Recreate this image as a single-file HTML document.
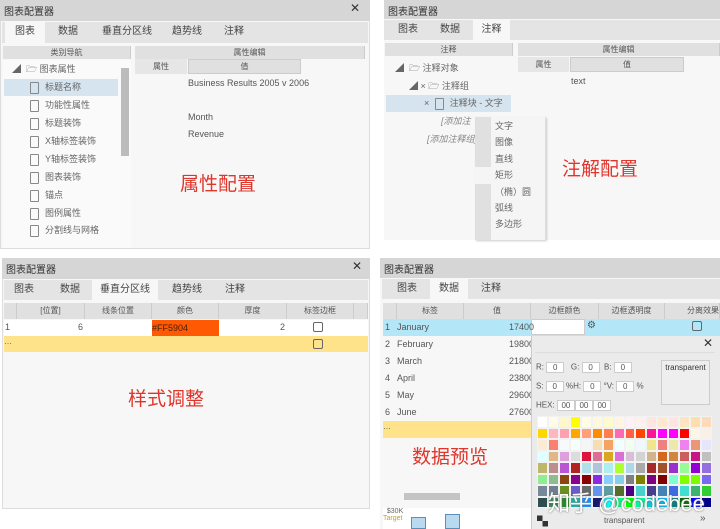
<!DOCTYPE html>
<html><head><meta charset="utf-8"><style>
*{margin:0;padding:0;box-sizing:border-box}
body{width:720px;height:529px;background:#fff;position:relative;overflow:hidden;font-family:"Liberation Sans","Noto Sans CJK SC",sans-serif;font-size:9px;color:#555}
.a{position:absolute}
.title{background:#d6d6d6;font-size:10px;color:#333;padding:3px 4px}
.tabs{background:#e4e4e4;border-bottom:1px solid #f8f8f8}
.tab{position:absolute;top:0;height:100%;font-size:10px;color:#444;text-align:center;line-height:20px}
.tab.on{background:#f7f7f7}
.hd{background:#e0e0e0;color:#555;text-align:center;font-size:8px;line-height:14px;border-right:1px solid #ccc}
.red{color:#e0352b;font-size:19px}
.ti{position:absolute;font-size:9px;color:#666;height:17px;line-height:17px}
.doc{display:inline-block;width:9px;height:12px;border:1px solid #888;border-radius:1px;vertical-align:middle;margin-right:6px}
.c{position:absolute;font-size:9px;line-height:17px;color:#555}
.cb{display:inline-block;width:10px;height:10px;border:1px solid #666;border-radius:2px}
.in{display:inline-block;background:#fff;border:1px solid #ccc;height:11px;line-height:9px;text-align:center;font-size:8px;vertical-align:middle}
#grid{position:absolute;left:537px;top:416px;width:175px;height:92px;display:grid;grid-template-columns:repeat(16,1fr);grid-template-rows:repeat(8,1fr)}
</style></head><body>

<!-- Panel 1 -->
<div class="a" style="left:0;top:0;width:370px;height:249px;background:#f7f7f7;border:1px solid #ddd"></div>
<div class="a title" style="left:0;top:0;width:370px;height:21px">图表配置器<span style="position:absolute;right:10px;top:1px;font-size:12px">✕</span></div>
<div class="a tabs" style="left:2px;top:22px;width:366px;height:22px">
<div class="tab on" style="left:3px;width:40px">图表</div>
<div class="tab" style="left:48px;width:36px">数据</div>
<div class="tab" style="left:96px;width:58px">垂直分区线</div>
<div class="tab" style="left:165px;width:40px">趋势线</div>
<div class="tab" style="left:216px;width:32px">注释</div>
</div>
<div class="a hd" style="left:3px;top:46px;width:128px;height:13px">类别导航</div>
<div class="a hd" style="left:135px;top:46px;width:230px;height:13px">属性编辑</div>
<div class="a" style="left:3px;top:60px;width:128px;height:188px;background:#fafafa"></div>
<div class="a" style="left:121px;top:68px;width:8px;height:88px;background:#bcbcbc"></div>
<div class="a" style="left:135px;top:59px;width:52px;height:15px;background:#e6e6e6;text-align:center;line-height:15px;font-size:8px">属性</div>
<div class="a" style="left:188px;top:59px;width:113px;height:15px;background:#e0e0e0;border:1px solid #ccc;text-align:center;line-height:13px;font-size:8px">值</div>
<div class="ti" style="left:12px;top:61px">◢ &nbsp;🗁 图表属性</div>
<div class="a" style="left:4px;top:79px;width:114px;height:17px;background:#d5e4ee"></div>
<div class="ti" style="left:30px;top:79px"><span class="doc"></span>标题名称</div>
<div class="ti" style="left:30px;top:97px"><span class="doc"></span>功能性属性</div>
<div class="ti" style="left:30px;top:115px"><span class="doc"></span>标题装饰</div>
<div class="ti" style="left:30px;top:133px"><span class="doc"></span>X轴标签装饰</div>
<div class="ti" style="left:30px;top:151px"><span class="doc"></span>Y轴标签装饰</div>
<div class="ti" style="left:30px;top:169px"><span class="doc"></span>图表装饰</div>
<div class="ti" style="left:30px;top:187px"><span class="doc"></span>锚点</div>
<div class="ti" style="left:30px;top:205px"><span class="doc"></span>图例属性</div>
<div class="ti" style="left:30px;top:222px"><span class="doc"></span>分割线与网格</div>
<div class="c" style="left:188px;top:75px">Business Results 2005 v 2006</div>
<div class="c" style="left:188px;top:109px">Month</div>
<div class="c" style="left:188px;top:126px">Revenue</div>
<div class="a red" style="left:180px;top:169px">属性配置</div>

<!-- Panel 2 -->
<div class="a" style="left:384px;top:0;width:336px;height:240px;background:#f7f7f7"></div>
<div class="a title" style="left:384px;top:0;width:336px;height:19px">图表配置器</div>
<div class="a tabs" style="left:384px;top:20px;width:336px;height:21px">
<div class="tab" style="left:6px;width:36px">图表</div>
<div class="tab" style="left:48px;width:36px">数据</div>
<div class="tab on" style="left:89px;width:37px">注释</div>
</div>
<div class="a hd" style="left:385px;top:43px;width:128px;height:13px">注释</div>
<div class="a hd" style="left:518px;top:43px;width:202px;height:13px">属性编辑</div>
<div class="a" style="left:518px;top:57px;width:51px;height:15px;background:#e6e6e6;text-align:center;line-height:15px;font-size:8px">属性</div>
<div class="a" style="left:570px;top:57px;width:114px;height:15px;background:#e0e0e0;border:1px solid #ccc;text-align:center;line-height:13px;font-size:8px">值</div>
<div class="c" style="left:571px;top:73px">text</div>
<div class="ti" style="left:395px;top:60px">◢ &nbsp;🗁 注释对象</div>
<div class="ti" style="left:409px;top:78px">◢ × 🗁 注释组</div>
<div class="a" style="left:386px;top:95px;width:125px;height:17px;background:#d5e4ee"></div>
<div class="ti" style="left:424px;top:95px">× <span class="doc" style="margin-left:3px"></span>注释块 - 文字</div>
<div class="ti" style="left:441px;top:113px;font-style:italic;color:#888">[添加注</div>
<div class="ti" style="left:427px;top:131px;font-style:italic;color:#888">[添加注释组]</div>
<div class="a" style="left:475px;top:117px;width:71px;height:123px;background:#f5f5f5;border-right:1px solid #ddd;box-shadow:1px 1px 2px #ccc"></div>
<div class="a" style="left:475px;top:117px;width:16px;height:50px;background:#e0e0e0"></div>
<div class="a" style="left:475px;top:184px;width:16px;height:56px;background:#e0e0e0"></div>
<div class="ti" style="left:495px;top:118px">文字</div>
<div class="ti" style="left:495px;top:134px">图像</div>
<div class="ti" style="left:495px;top:151px">直线</div>
<div class="ti" style="left:495px;top:167px">矩形</div>
<div class="ti" style="left:495px;top:184px">（椭）圆</div>
<div class="ti" style="left:495px;top:200px">弧线</div>
<div class="ti" style="left:495px;top:216px">多边形</div>
<div class="a red" style="left:562px;top:154px">注解配置</div>

<!-- Panel 3 -->
<div class="a" style="left:2px;top:258px;width:368px;height:251px;background:#f7f7f7;border:1px solid #ddd"></div>
<div class="a title" style="left:2px;top:258px;width:368px;height:21px">图表配置器<span style="position:absolute;right:8px;top:1px;font-size:12px">✕</span></div>
<div class="a tabs" style="left:4px;top:280px;width:364px;height:21px">
<div class="tab" style="left:0;width:40px">图表</div>
<div class="tab" style="left:48px;width:36px">数据</div>
<div class="tab on" style="left:88px;width:66px">垂直分区线</div>
<div class="tab" style="left:162px;width:42px">趋势线</div>
<div class="tab" style="left:214px;width:34px">注释</div>
</div>
<div class="a hd" style="left:4px;top:303px;width:13px;height:16px"></div>
<div class="a hd" style="left:17px;top:303px;width:68px;height:16px;line-height:16px">[位置]</div>
<div class="a hd" style="left:85px;top:303px;width:67px;height:16px;line-height:16px">线条位置</div>
<div class="a hd" style="left:152px;top:303px;width:67px;height:16px;line-height:16px">颜色</div>
<div class="a hd" style="left:219px;top:303px;width:68px;height:16px;line-height:16px">厚度</div>
<div class="a hd" style="left:287px;top:303px;width:67px;height:16px;line-height:16px">标签边框</div>
<div class="a hd" style="left:354px;top:303px;width:14px;height:16px"></div>
<div class="a" style="left:4px;top:320px;width:364px;height:16px;background:#fff"></div>
<div class="c" style="left:5px;top:319px">1</div>
<div class="c" style="left:78px;top:319px">6</div>
<div class="a" style="left:152px;top:320px;width:67px;height:16px;background:#ff5904;color:#402010;font-size:9px;line-height:16px">#FF5904</div>
<div class="c" style="left:280px;top:319px">2</div>
<div class="a cb" style="left:313px;top:322px"></div>
<div class="a" style="left:4px;top:336px;width:364px;height:16px;background:#ffe38a;font-size:8px;line-height:12px">…</div>
<div class="a cb" style="left:313px;top:339px"></div>
<div class="a red" style="left:128px;top:384px">样式调整</div>

<!-- Panel 4 -->
<div class="a" style="left:380px;top:258px;width:340px;height:271px;background:#f7f7f7"></div>
<div class="a title" style="left:380px;top:258px;width:340px;height:20px">图表配置器</div>
<div class="a tabs" style="left:382px;top:279px;width:338px;height:21px">
<div class="tab" style="left:6px;width:38px">图表</div>
<div class="tab on" style="left:48px;width:38px">数据</div>
<div class="tab" style="left:91px;width:36px">注释</div>
</div>
<div class="a hd" style="left:383px;top:303px;width:14px;height:16px"></div>
<div class="a hd" style="left:397px;top:303px;width:67px;height:16px;line-height:16px">标签</div>
<div class="a hd" style="left:464px;top:303px;width:67px;height:16px;line-height:16px">值</div>
<div class="a hd" style="left:531px;top:303px;width:68px;height:16px;line-height:16px">边框颜色</div>
<div class="a hd" style="left:599px;top:303px;width:66px;height:16px;line-height:16px">边框透明度</div>
<div class="a hd" style="left:665px;top:303px;width:55px;height:16px;line-height:16px;text-align:right">分离效果</div>
<div class="a" style="left:383px;top:319px;width:337px;height:17px;background:#b3e6f7"></div>
<div class="a" style="left:531px;top:319px;width:54px;height:16px;background:#fff;border:1px solid #ccc"></div>
<div class="a" style="left:587px;top:320px;font-size:10px;color:#555">⚙</div>
<div class="a cb" style="left:692px;top:321px"></div>
<div class="c" style="left:385px;top:319px">1</div><div class="c" style="left:397px;top:319px">January</div><div class="c" style="left:509px;top:319px">17400</div>
<div class="c" style="left:385px;top:336px">2</div><div class="c" style="left:397px;top:336px">February</div><div class="c" style="left:509px;top:336px">19800</div>
<div class="c" style="left:385px;top:353px">3</div><div class="c" style="left:397px;top:353px">March</div><div class="c" style="left:509px;top:353px">21800</div>
<div class="c" style="left:385px;top:370px">4</div><div class="c" style="left:397px;top:370px">April</div><div class="c" style="left:509px;top:370px">23800</div>
<div class="c" style="left:385px;top:387px">5</div><div class="c" style="left:397px;top:387px">May</div><div class="c" style="left:509px;top:387px">29600</div>
<div class="c" style="left:385px;top:404px">6</div><div class="c" style="left:397px;top:404px">June</div><div class="c" style="left:509px;top:404px">27600</div>
<div class="a" style="left:383px;top:421px;width:148px;height:17px;background:#ffe38a;font-size:8px;line-height:12px">…</div>
<div class="a red" style="left:412px;top:442px">数据预览</div>
<div class="a" style="left:404px;top:493px;width:56px;height:7px;background:#c4c4c4"></div>
<div class="a" style="left:383px;top:508px;width:148px;height:21px;background:#fff;font-size:7px;color:#666">&nbsp;&nbsp;$30K<br><span style="color:#c9a21a">Target</span></div>
<div class="a" style="left:411px;top:517px;width:15px;height:12px;background:#b8d9ef;border:1px solid #5b8fb8"></div>
<div class="a" style="left:445px;top:514px;width:15px;height:15px;background:#b8d9ef;border:1px solid #5b8fb8"></div>
<!-- color picker -->
<div class="a" style="left:531px;top:336px;width:189px;height:193px;background:#ebebeb;border-left:1px solid #ccc"></div>
<div class="a" style="left:703px;top:336px;font-size:12px;color:#333">✕</div>
<div class="a" style="left:535px;top:352px;width:180px;border-top:1px solid #ddd"></div>
<div class="a" style="left:536px;top:362px;font-size:8px;color:#555">R: <span class="in" style="width:18px">0</span> &nbsp;&nbsp;G: <span class="in" style="width:18px">0</span> &nbsp;B: <span class="in" style="width:18px">0</span></div>
<div class="a" style="left:536px;top:381px;font-size:8px;color:#555">S: <span class="in" style="width:18px">0</span> %H: <span class="in" style="width:18px">0</span> °V: <span class="in" style="width:18px">0</span> %</div>
<div class="a" style="left:536px;top:400px;font-size:8px;color:#555">HEX: <span class="in" style="width:18px">00</span><span class="in" style="width:18px">00</span><span class="in" style="width:18px">00</span></div>
<div class="a" style="left:661px;top:360px;width:49px;height:45px;border:1px solid #ccc;background:#eee;font-size:8px;color:#333;text-align:center;padding-top:2px">transparent</div>
<div id="grid"></div>
<div class="a" style="left:537px;top:513px;font-size:11px;color:#333">▚</div>
<div class="a" style="left:604px;top:516px;font-size:8px;color:#555">transparent</div>
<div class="a" style="left:700px;top:513px;font-size:10px;color:#555">»</div>
<div class="a" style="left:548px;top:486px;font-size:22px;color:#fff;text-shadow:0 0 2px #666;font-family:'Liberation Sans','Noto Sans CJK SC',sans-serif">知乎 @codebee</div>
<script>
var c="#fff #fffbe6 #fff7cc #ffff00 #fffde8 #fff8dc #fffacd #fff5e0 #fff0f5 #fff0f0 #ffe4e1 #ffe8d0 #ffe4e1 #ffe4c4 #ffdead #ffdab9 #ffd700 #ffb6c1 #ffa0b0 #ffa500 #ffa07a #ff8c00 #ff7f50 #ff69b4 #ff6347 #ff4500 #ff1493 #ff00ff #ff00ff #ff0000 #fdf5e6 #faf0e6 #faebd7 #fa8072 #f8f8ff #f5fffa #f5f5f5 #f5deb3 #f4a460 #f0ffff #f0fff0 #f0f8ff #f0e68c #f08080 #eee8aa #ee82ee #e9967a #e6e6fa #e0ffff #deb887 #dda0dd #dcdcdc #dc143c #db7093 #daa520 #da70d6 #d8bfd8 #d3d3d3 #d2b48c #d2691e #cd853f #cd5c5c #c71585 #c0c0c0 #bdb76b #bc8f8f #ba55d3 #b22222 #b0e0e6 #b0c4de #afeeee #adff2f #add8e6 #a9a9a9 #a52a2a #a0522d #9932cc #98fb98 #9400d3 #9370db #90ee90 #8fbc8f #8b4513 #8b008b #8b0000 #8a2be2 #87cefa #87ceeb #808080 #808000 #800080 #800000 #7fffd4 #7fff00 #7cfc00 #7b68ee #778899 #708090 #6b8e23 #6a5acd #696969 #6495ed #5f9ea0 #556b2f #4b0082 #48d1cc #483d8b #4682b4 #4169e1 #40e0d0 #3cb371 #32cd32 #2f4f4f #2e8b57 #228b22 #20b2aa #1e90ff #191970 #00ffff #00ff7f #00ff00 #00fa9a #00ced1 #00bfff #008080 #006400 #0000ff #00008b #000080 #000000".split(" ").slice(0,128);
var g=document.getElementById("grid");c.forEach(function(x){var d=document.createElement("div");d.style.background=x;d.style.border="1px solid #f2f2f2";g.appendChild(d)});
</script>
</body></html>
